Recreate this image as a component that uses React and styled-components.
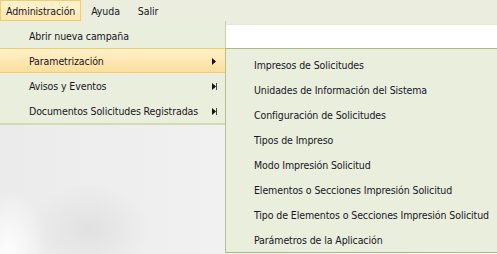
import React from 'react';
import styled, { createGlobalStyle } from 'styled-components';

const GlobalStyle = createGlobalStyle`
  html, body {
    margin: 0;
    padding: 0;
    width: 497px;
    height: 254px;
    overflow: hidden;
    background: #f4f4f4;
  }
  body {
    font-family: Tahoma, "DejaVu Sans Condensed", "Liberation Sans", sans-serif;
    font-size: 10.5px;
    letter-spacing: -0.1px;
    color: #161626;
  }
`;

const Root = styled.div`
  position: relative;
  width: 497px;
  height: 254px;
  overflow: hidden;
`;

const MenuBar = styled.div`
  display: flex;
  align-items: stretch;
  height: 22px;
  background: #ebeedf;
`;

const TopItem = styled.div`
  display: flex;
  align-items: center;
  padding: 1px ${({ active }) => (active ? 5 : 8)}px 0;
  margin-right: ${({ active }) => (active ? 1 : 0)}px;
  box-sizing: border-box;
  height: 21px;
  border: 1px solid ${({ active }) => (active ? '#f5c96f' : 'transparent')};
  background: ${({ active }) =>
    active ? 'linear-gradient(#fff3cf, #fde7b0)' : 'transparent'};
`;

const Body = styled.div`
  display: flex;
  flex-direction: column;
  height: 232px;
  background: #ebeedf;
`;

const Strip = styled.div`
  margin-top: 2px;
  height: 24px;
  background: #ffffff;
  border-top: 1px solid #e4ebc6;
`;

const Canvas = styled.div`
  flex: 1;
  background:
    radial-gradient(ellipse 60px 45px at 90px 180px, rgba(215, 215, 215, 0.55), transparent),
    radial-gradient(ellipse 40px 60px at 8px 200px, rgba(255, 255, 255, 0.9), transparent),
    linear-gradient(90deg, #ebebeb 0%, #f0f0f0 40%, #f9f9f9 100%);
`;

const Menu = styled.div`
  position: absolute;
  top: ${({ top }) => top}px;
  left: ${({ left }) => left}px;
  width: ${({ width }) => width}px;
  box-sizing: border-box;
  padding: ${({ padTop }) => padTop}px 0 0;
  background: #eaeedd;
  border-right: ${({ borderRight }) => borderRight};
  border-left: ${({ borderLeft }) => borderLeft};
  border-top: ${({ borderTop }) => borderTop};
  border-bottom: ${({ borderBottom }) => borderBottom};
`;

const MenuItem = styled.div`
  display: flex;
  align-items: center;
  justify-content: space-between;
  box-sizing: border-box;
  height: 25px;
  padding: 1px 8px 0 ${({ indent }) => indent}px;
  border-top: 1px solid ${({ active }) => (active ? '#f6c872' : 'transparent')};
  border-bottom: 1px solid ${({ active }) => (active ? '#f6c872' : 'transparent')};
  background: ${({ active }) =>
    active ? 'linear-gradient(#fff1cb, #fdde9d)' : 'transparent'};
  white-space: nowrap;
`;

const Arrow = ({ bar }) => (
  <svg width="5" height="7" viewBox="0 0 5 7">
    <path d="M0 0 L4 3.5 L0 7 Z" fill="#111" />
    {bar && <rect x="4" y="0" width="1" height="7" fill="#444" />}
  </svg>
);

const mainItems = [
  { label: 'Abrir nueva campaña' },
  { label: 'Parametrización', sub: true, active: true },
  { label: 'Avisos y Eventos', sub: true },
  { label: 'Documentos Solicitudes Registradas', sub: true },
];

const subItems = [
  'Impresos de Solicitudes',
  'Unidades de Información del Sistema',
  'Configuración de Solicitudes',
  'Tipos de Impreso',
  'Modo Impresión Solicitud',
  'Elementos o Secciones Impresión Solicitud',
  'Tipo de Elementos o Secciones Impresión Solicitud',
  'Parámetros de la Aplicación',
];

export default function App() {
  return (
    <Root>
      <GlobalStyle />
      <MenuBar>
        <TopItem active>Administración</TopItem>
        <TopItem>Ayuda</TopItem>
        <TopItem>Salir</TopItem>
      </MenuBar>
      <Body>
        <Strip />
        <Canvas />
      </Body>

      <Menu
        top={21}
        left={0}
        width={226}
        padTop={2}
        borderRight="1px solid #c6d1a6"
        borderBottom="2px solid #d2dbb4"
      >
        {mainItems.map((item) => (
          <MenuItem key={item.label} indent={29} active={item.active}>
            <span>{item.label}</span>
            {item.sub && <Arrow bar={!item.active} />}
          </MenuItem>
        ))}
      </Menu>

      <Menu
        top={48}
        left={225}
        width={290}
        padTop={3}
        borderLeft="1px solid #b3c291"
        borderTop="1px solid #a9b986"
        borderBottom="1px solid #a9b986"
      >
        {subItems.map((label) => (
          <MenuItem key={label} indent={28}>
            <span>{label}</span>
          </MenuItem>
        ))}
      </Menu>
    </Root>
  );
}
